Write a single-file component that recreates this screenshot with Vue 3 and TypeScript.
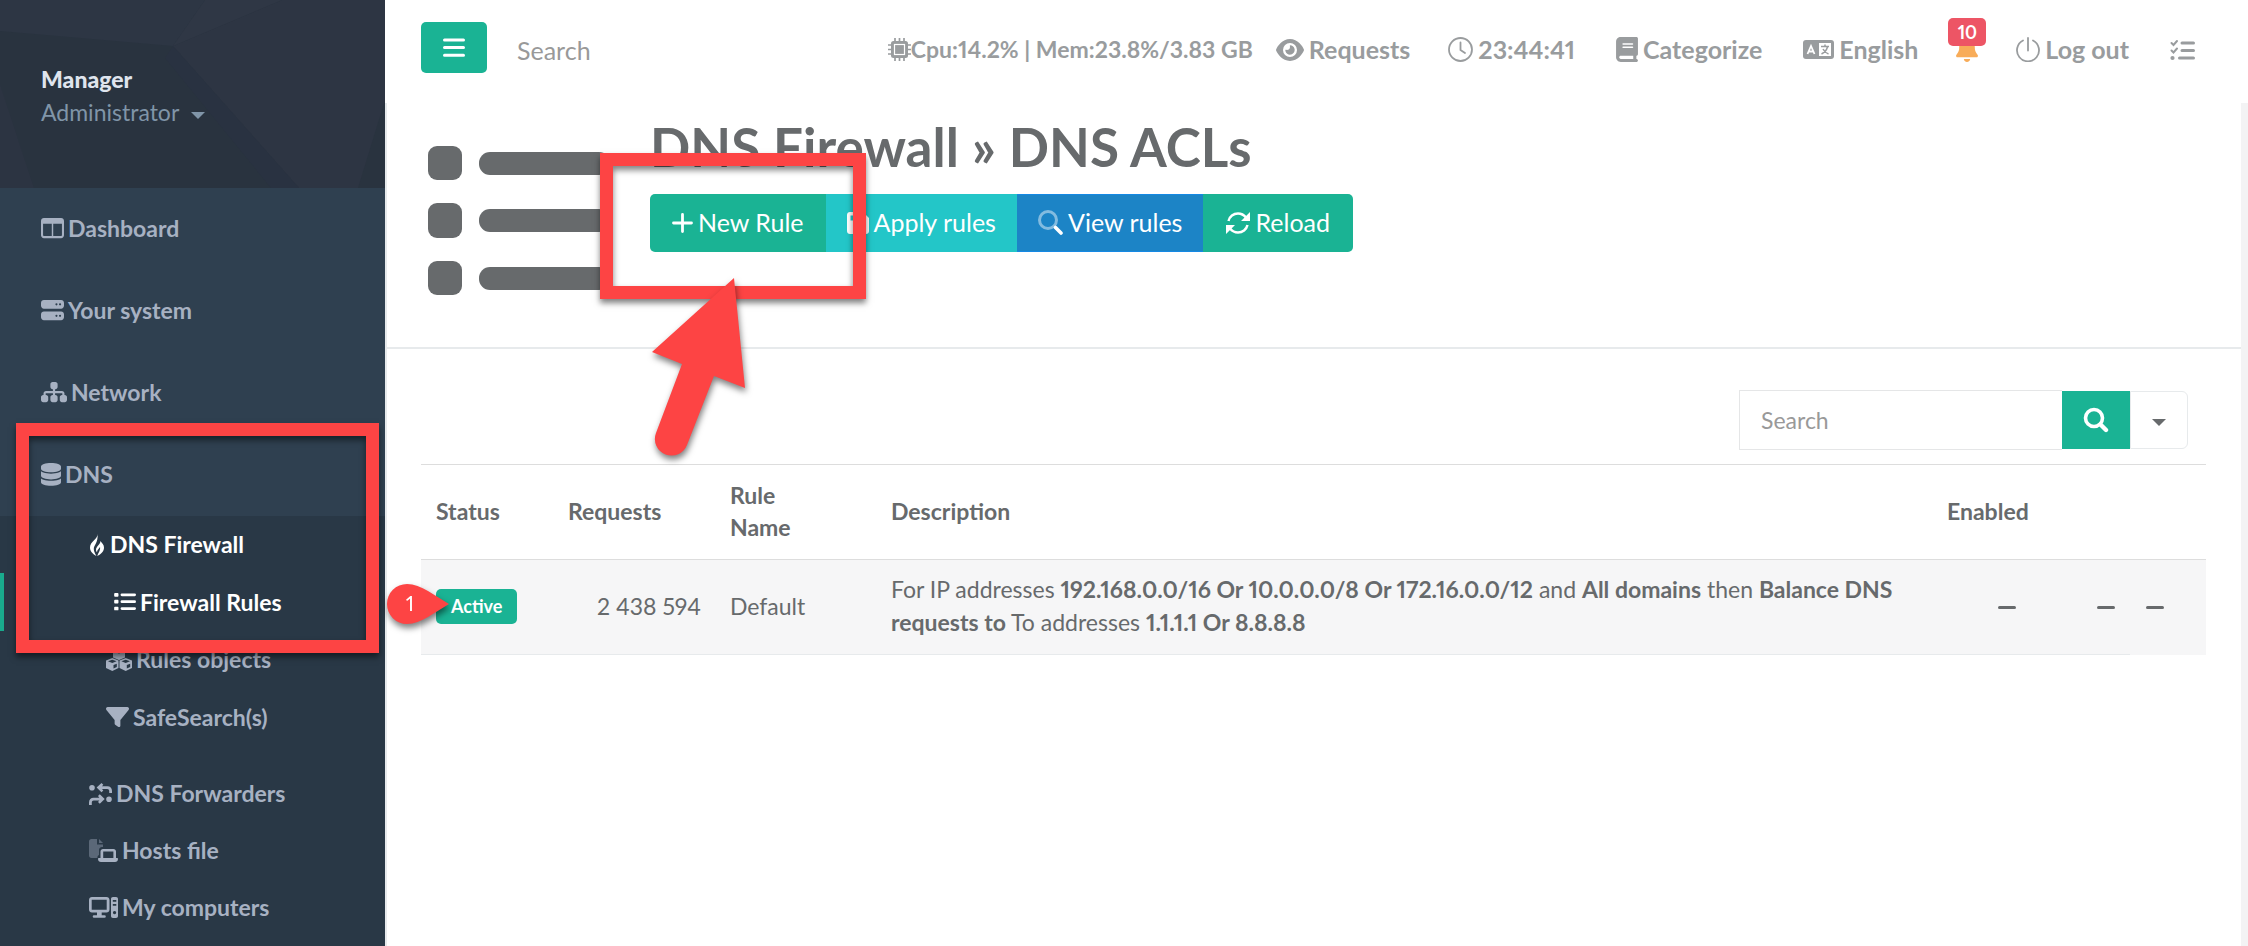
<script setup lang="ts">
import { ref } from 'vue'

interface NavItem {
  label: string
  icon: string
}

const mainItems: NavItem[] = [
  { label: 'Dashboard', icon: 'columns' },
  { label: 'Your system', icon: 'server' },
  { label: 'Network', icon: 'sitemap' },
  { label: 'DNS', icon: 'database' },
]

const firewallItems: NavItem[] = [
  { label: 'Firewall Rules', icon: 'list' },
  { label: 'Rules objects', icon: 'cubes' },
  { label: 'SafeSearch(s)', icon: 'filter' },
]

const dnsItems: NavItem[] = [
  { label: 'DNS Forwarders', icon: 'forward' },
  { label: 'Hosts file', icon: 'hosts' },
  { label: 'My computers', icon: 'computer' },
]

interface Shape {
  box: string
  width: number
  path: string
  faded?: string
}

const icons: Record<string, Shape> = {
  columns: {
    box: '0 32 512 448',
    width: 23,
    path: 'M64 32C29 32 0 61 0 96v320c0 35 29 64 64 64h384c35 0 64-29 64-64V96c0-35-29-64-64-64zM46 160h194v274H64c-10 0-18-8-18-18zM272 160h194v256c0 10-8 18-18 18H272z',
  },
  server: {
    box: '0 32 512 448',
    width: 23,
    path: 'M64 32C29 32 0 61 0 96v64c0 35 29 64 64 64h384c35 0 64-29 64-64V96c0-35-29-64-64-64zM344 104a24 24 0 1 1 0 48 24 24 0 1 1 0-48zm80 0a24 24 0 1 1 0 48 24 24 0 1 1 0-48zM64 288c-35 0-64 29-64 64v64c0 35 29 64 64 64h384c35 0 64-29 64-64v-64c0-35-29-64-64-64zm280 72a24 24 0 1 1 0 48 24 24 0 1 1 0-48zm80 0a24 24 0 1 1 0 48 24 24 0 1 1 0-48z',
  },
  sitemap: {
    box: '0 32 576 448',
    width: 26,
    path: 'M208 80c0-26 22-48 48-48h64c26 0 48 22 48 48v64c0 26-22 48-48 48h-8v40h152c31 0 56 25 56 56v32h8c26 0 48 22 48 48v64c0 26-22 48-48 48h-64c-26 0-48-22-48-48v-64c0-26 22-48 48-48h8v-32c0-4-4-8-8-8H312v40h8c26 0 48 22 48 48v64c0 26-22 48-48 48h-64c-26 0-48-22-48-48v-64c0-26 22-48 48-48h8v-40H112c-4 0-8 4-8 8v32h8c26 0 48 22 48 48v64c0 26-22 48-48 48H48c-26 0-48-22-48-48v-64c0-26 22-48 48-48h8v-32c0-31 25-56 56-56h152v-40h-8c-26 0-48-22-48-48z',
  },
  database: {
    box: '0 0 448 512',
    width: 20,
    path: 'M448 80v48c0 44.2-100.3 80-224 80S0 172.2 0 128V80C0 35.8 100.3 0 224 0S448 35.8 448 80zM393.2 214.7c20.8-7.4 39.9-16.9 54.8-28.6V288c0 44.2-100.3 80-224 80S0 332.2 0 288V186.1c14.9 11.8 34 21.2 54.8 28.6C99.7 230.7 159.5 240 224 240s124.3-9.3 169.2-25.3zM0 346.1c14.9 11.8 34 21.2 54.8 28.6C99.7 390.7 159.5 400 224 400s124.3-9.3 169.2-25.3c20.8-7.4 39.9-16.9 54.8-28.6V432c0 44.2-100.3 80-224 80S0 476.2 0 432V346.1z',
  },
  flame: {
    box: '0 0 14 22',
    width: 14,
    path: 'M7.6 0C7.8 5 0 7.500 0 13.500 0 17.500 3 20 6.400 22 4.600 18.500 3.600 16.500 3.800 14.500 4 11 8.200 9 7.600 0zM10.300 7C10.800 10.500 6 12 6 16c0 1 .5 1.800 1 2.200C7 15.500 9.400 14.500 10 13c.6 3-1.300 5-2.700 9C11 20 14 17.500 14 13.500 14 10.500 12 9 10.300 7z',
  },
  list: {
    box: '0 32 512 448',
    width: 22,
    path: 'M24 56h60a20 20 0 0 1 20 20v44a20 20 0 0 1-20 20H24a20 20 0 0 1-20-20V76a20 20 0 0 1 20-20zM184 64h296a32 32 0 0 1 0 64H184a32 32 0 0 1 0-64zM24 214h60a20 20 0 0 1 20 20v44a20 20 0 0 1-20 20H24a20 20 0 0 1-20-20v-44a20 20 0 0 1 20-20zM184 224h296a32 32 0 0 1 0 64H184a32 32 0 0 1 0-64zM24 374h60a20 20 0 0 1 20 20v44a20 20 0 0 1-20 20H24a20 20 0 0 1-20-20v-44a20 20 0 0 1 20-20zM184 384h296a32 32 0 0 1 0 64H184a32 32 0 0 1 0-64z',
  },
  cubes: {
    box: '0 0 26 24',
    width: 26,
    path: 'M13 0l6 2.400v8L13 13 7 10.400v-8zM9 4v1l4 1.600L17 5V4l-4 1.600zM6.300 11l6.200 2.500v7.500L6.300 24 0 21v-7.500zM2 14.300l4.300 1.800 4.300-1.800-4.300-1.600zM7.500 18v3.500l3.300-1.500v-3.300zM19.700 11l6.300 2.500V21l-6.300 3-6.200-3v-7.500zM15.400 14.300l4.300 1.800 4.300-1.800-4.300-1.600zM20.800 18v3.500l3.400-1.500v-3.300z',
  },
  filter: {
    box: '0 32 512 448',
    width: 23,
    path: 'M3.900 54.900C10.500 40.900 24.500 32 40 32H472c15.500 0 29.500 8.900 36.100 22.900s4.600 30.500-5.200 42.500L320 320.900V448c0 12.100-6.800 23.200-17.700 28.600s-23.800 4.300-33.500-3l-64-48c-8.100-6-12.800-15.500-12.800-25.600V320.900L9 97.300C-.7 85.400-2.800 68.800 3.900 54.900z',
  },
  forward: {
    box: '0 0 23 22',
    width: 23,
    path: 'M3 2a2.800 2.800 0 1 1 0 5.600A2.800 2.800 0 1 1 3 2zM12.500 0l1.800 1.800L13 3.300h5.500c2.600 0 4.500 2 4.500 4.700v2h-2.800V8c0-1.200-.8-2-2-2H13l1.300 1.400-1.800 1.800L7.600 4.600zM20 13.400a2.800 2.800 0 1 1 0 5.600 2.800 2.800 0 1 1 0-5.600zM10.800 11.300l4.900 4.800-4.900 4.700L9 19l1.400-1.500H4.800c-1.200 0-2 .8-2 2V22H0v-2.500c0-2.700 1.900-4.700 4.500-4.700h5.900L9 13.100z',
  },
  hosts: {
    box: '0 0 29 23',
    width: 29,
    faded: 'M2.500 0H8v5.500h6V8h-1c-1.800 0-3 1.400-3 3v5c-1.200.5-1.800 1.500-1.500 3h-6C1 19 0 18 0 16.500v-14C0 1 1 0 2.500 0zM10 0l4 4h-4z',
    path: 'M14 10h10.500c1.400 0 2.500 1 2.500 2.500V19h1c.600 0 1 .4 1 1 0 1.700-1.300 3-3 3H12c-1.700 0-3-1.300-3-3 0-.6.400-1 1-1h1.500v-6.500c0-1.500 1.100-2.500 2.500-2.500zm.2 2.600V19h10.200v-6.400z',
  },
  computer: {
    box: '0 0 29 21',
    width: 29,
    path: 'M3 0h14.500c1.700 0 3 1.300 3 3v9.500c0 1.700-1.300 3-3 3h-4.800v2.700h2.800a1.300 1.300 0 0 1 0 2.600H5a1.300 1.300 0 0 1 0-2.600h3v-2.700H3c-1.700 0-3-1.300-3-3V3c0-1.700 1.300-3 3-3zm-.3 2.700v10.100h15V2.700zM24.500 0H27c1.200 0 2 .8 2 2v17c0 1.200-.8 2-2 2h-3c-1.200 0-2-.8-2-2V2c0-1.200.8-2 2-2zM23.800 3v1.700h3.500V3zM23.800 7v1.700h3.500V7zM25.500 14a1.600 1.600 0 1 0 .1 0z',
  },
}

const search = ref('')
const tableSearch = ref('')
</script>

<template>
  <div class="page">
    <nav class="sidebar">
      <header class="profile">
        <svg class="facets" viewBox="0 0 385 188" preserveAspectRatio="none" aria-hidden="true">
          <path fill="#29333f" d="M0 0h385v188H0z" />
          <path fill="#2d3644" d="M0 0h205l-32 46L0 31z" />
          <path fill="#2d3543" d="M173 46L282 0h103v100l-27 88h-59z" />
          <path fill="#2f3745" d="M205 0h77L173 46z" />
          <path fill="#293241" d="M173 46l126 142h-28L165 58z" />
          <path fill="#2c3442" d="M0 84l34 104H0z" />
        </svg>
        <div class="profile-text">
          <strong>Manager</strong>
          <button class="role" type="button">Administrator <i class="caret"></i></button>
        </div>
      </header>
      <ul class="menu">
        <li v-for="item in mainItems" :key="item.label">
          <a href="#">
            <svg class="icon" :viewBox="icons[item.icon].box" :width="icons[item.icon].width" aria-hidden="true">
              <path fill-rule="evenodd" :d="icons[item.icon].path" />
            </svg>
            <span>{{ item.label }}</span>
          </a>
        </li>
      </ul>
      <ul class="submenu">
        <li>
          <a href="#" class="current flame">
            <svg class="icon" :viewBox="icons.flame.box" :width="icons.flame.width" aria-hidden="true">
              <path :d="icons.flame.path" />
            </svg>
            <span>DNS Firewall</span>
          </a>
          <ul class="third">
            <li v-for="(item, i) in firewallItems" :key="item.label" :class="{ active: i === 0 }">
              <a href="#" :class="{ current: i === 0 }">
                <svg class="icon" :viewBox="icons[item.icon].box" :width="icons[item.icon].width" aria-hidden="true">
                  <path fill-rule="evenodd" :d="icons[item.icon].path" />
                </svg>
                <span>{{ item.label }}</span>
              </a>
            </li>
          </ul>
        </li>
        <li v-for="item in dnsItems" :key="item.label">
          <a href="#">
            <svg class="icon" :viewBox="icons[item.icon].box" :width="icons[item.icon].width" aria-hidden="true">
              <path v-if="icons[item.icon].faded" opacity="0.4" :d="icons[item.icon].faded" />
              <path fill-rule="evenodd" :d="icons[item.icon].path" />
            </svg>
            <span>{{ item.label }}</span>
          </a>
        </li>
      </ul>
      <div class="mark-frame mark-menu"></div>
    </nav>

    <main class="content">
      <div class="topbar">
        <button class="toggle" type="button" aria-label="Toggle menu">
          <svg width="22" height="20" viewBox="0 0 22 20" aria-hidden="true">
            <path d="M1.500 2h19M1.500 9.600h19M1.500 17.200h19" stroke="#fff" stroke-width="3" stroke-linecap="round" />
          </svg>
        </button>
        <input v-model="search" class="top-search" type="text" placeholder="Search" aria-label="Search" />
        <ul class="toplinks">
          <li class="cpu">
            <a href="#">
              <svg width="23" height="23" viewBox="0 0 23 23" aria-hidden="true">
                <path d="M7 0v23M11.500 0v23M16 0v23M0 7h23M0 11.500h23M0 16h23" stroke="currentColor" stroke-width="1.700" />
                <rect x="3" y="3" width="17" height="17" rx="2.500" fill="currentColor" />
                <rect x="6.500" y="6.500" width="10" height="10" fill="currentColor" stroke="#fff" stroke-width="1.200" />
              </svg><span>Cpu:14.2% | Mem:23.8%/3.83 GB</span>
            </a>
          </li>
          <li class="requests">
            <a href="#">
              <svg width="28" height="22" viewBox="0 32 576 448" aria-hidden="true">
                <path fill="currentColor" d="M288 32c-80.800 0-145.500 36.800-192.600 80.600C48.600 156 17.300 208 2.500 243.700c-3.300 7.900-3.300 16.700 0 24.600C17.300 304 48.600 356 95.400 399.400C142.500 443.200 207.200 480 288 480s145.500-36.800 192.600-80.600c46.800-43.500 78.100-95.400 93-131.100c3.300-7.900 3.300-16.700 0-24.600c-14.900-35.700-46.200-87.700-93-131.100C433.500 68.800 368.800 32 288 32zM144 256a144 144 0 1 1 288 0 144 144 0 1 1 -288 0zm144-64c0 35.300-28.700 64-64 64c-7.100 0-13.900-1.200-20.300-3.300c-5.500-1.800-11.900 1.600-11.700 7.400c.3 6.900 1.300 13.800 3.200 20.700c13.700 51.200 66.400 81.600 117.600 67.900s81.600-66.400 67.900-117.600c-11.100-41.500-47.800-69.400-88.600-71.100c-5.800-.2-9.200 6.100-7.400 11.700c2.100 6.400 3.300 13.200 3.300 20.300z" />
              </svg>
              <span>Requests</span>
            </a>
          </li>
          <li>
            <a href="#">
              <svg width="25" height="25" viewBox="0 0 25 25" fill="none" stroke="currentColor" aria-hidden="true">
                <circle cx="12.500" cy="12.500" r="11.500" stroke-width="1.800" />
                <path d="M12.500 5.500v7.500l4.500 3" stroke-width="1.800" stroke-linecap="round" />
              </svg>
              <span>23:44:41</span>
            </a>
          </li>
          <li class="wide">
            <a href="#">
              <svg width="22" height="25" viewBox="0 0 448 512" aria-hidden="true">
                <path fill="currentColor" d="M96 0C43 0 0 43 0 96V416c0 53 43 96 96 96H384h32c17.700 0 32-14.300 32-32s-14.300-32-32-32V384c17.700 0 32-14.300 32-32V32c0-17.700-14.300-32-32-32H384 96zm0 384H352v64H96c-17.700 0-32-14.300-32-32s14.300-32 32-32zm32-240c0-8.800 7.200-16 16-16H336c8.800 0 16 7.200 16 16s-7.200 16-16 16H144c-8.800 0-16-7.200-16-16zm16 48H336c8.800 0 16 7.200 16 16s-7.200 16-16 16H144c-8.800 0-16-7.200-16-16s7.200-16 16-16z" />
              </svg>
              <span>Categorize</span>
            </a>
          </li>
          <li class="wide">
            <a href="#">
              <svg width="31" height="19" viewBox="0 0 31 19" aria-hidden="true">
                <rect width="31" height="19" rx="3" fill="currentColor" />
                <path d="M16 3h12v13H16z" fill="#fff" />
                <path d="M4.500 14L8 6l3.500 8M5.700 11.500h4.600" fill="none" stroke="#fff" stroke-width="1.800" />
                <path d="M18 6.500h8M22 4.500v2M24.500 7c-1 3.500-3 5.500-6 7M20 9c1.500 3 3 4 5.500 5" fill="none" stroke="currentColor" stroke-width="1.500" />
              </svg>
              <span>English</span>
            </a>
          </li>
          <li class="narrow">
            <a href="#" class="bell" aria-label="10 notifications">
              <svg width="22" height="25" viewBox="0 0 448 512" aria-hidden="true">
                <path fill="#f8ac59" d="M224 0c-17.700 0-32 14.300-32 32V51.200C119 66 64 130.600 64 208v18.800c0 47-17.300 92.400-48.500 127.600l-7.400 8.300c-8.400 9.400-10.400 22.900-5.300 34.400S19.400 416 32 416H416c12.600 0 24-7.400 29.200-18.900s3.100-25-5.300-34.400l-7.400-8.300C401.300 319.200 384 273.900 384 226.800V208c0-77.400-55-142-128-156.800V32c0-17.700-14.300-32-32-32zm45.300 493.300c12-12 18.700-28.300 18.700-45.300H224 160c0 17 6.700 33.300 18.700 45.300s28.300 18.700 45.300 18.700s33.300-6.700 45.300-18.700z" />
              </svg>
              <span class="badge">10</span>
            </a>
          </li>
          <li class="narrow">
            <a href="#">
              <svg width="24" height="25" viewBox="0 0 24 25" fill="none" stroke="currentColor" stroke-width="1.800" stroke-linecap="round" aria-hidden="true">
                <path d="M12 1v12.500M7 3.500a11 11 0 1 0 10 0" />
              </svg>
              <span>Log out</span>
            </a>
          </li>
          <li class="wide">
            <a href="#" aria-label="Tasks">
              <svg width="25" height="22" viewBox="0 0 25 22" fill="none" stroke="currentColor" stroke-linecap="round" aria-hidden="true">
                <path d="M12 4h11.500M12 11.500h11.500M9.500 19h14" stroke-width="3" />
                <path d="M1.500 4l2 2L7 2M1.500 11.500l2 2L7 9.500" stroke-width="2" />
                <circle cx="2.500" cy="19" r="2.100" fill="currentColor" stroke="none" />
              </svg>
            </a>
          </li>
        </ul>
      </div>

      <section class="panel">
        <div class="heading">
          <svg class="heading-icon" width="184" height="150" viewBox="0 0 184 150" aria-hidden="true">
            <g fill="#676a6c">
              <rect x="1" y="1" width="34" height="34" rx="9" />
              <rect x="52" y="7" width="131" height="23" rx="11" />
              <rect x="1" y="58" width="34" height="35" rx="9" />
              <rect x="52" y="64" width="131" height="23" rx="11" />
              <rect x="1" y="116" width="34" height="34" rx="9" />
              <rect x="52" y="122" width="131" height="23" rx="11" />
            </g>
          </svg>
          <div class="heading-body">
            <h1>DNS Firewall » DNS ACLs</h1>
            <div class="btn-group">
              <button type="button" class="btn primary">
                <svg width="21" height="20" viewBox="0 0 21 20" aria-hidden="true">
                  <path d="M10.500 1.500v17M1.500 10h18" stroke="#fff" stroke-width="2.800" stroke-linecap="round" />
                </svg>
                <span>New Rule</span>
              </button>
              <button type="button" class="btn info">
                <svg width="22" height="22" viewBox="0 0 22 22" aria-hidden="true">
                  <path fill="#fff" fill-rule="evenodd" d="M3 0h13l6 6v13c0 1.700-1.300 3-3 3H3c-1.700 0-3-1.300-3-3V3c0-1.700 1.300-3 3-3zm.5 3.500v5h12v-5zM11 12a3 3 0 1 0 .1 0z" />
                </svg>
                <span>Apply rules</span>
              </button>
              <button type="button" class="btn view">
                <svg width="25" height="25" viewBox="0 0 25 25" fill="none" stroke="#fff" aria-hidden="true">
                  <circle cx="10" cy="10" r="8.500" stroke-width="3" opacity="0.45" />
                  <path d="M17.500 17.500l5.500 5.500" stroke-width="3.600" stroke-linecap="round" />
                </svg>
                <span>View rules</span>
              </button>
              <button type="button" class="btn primary">
                <svg width="24" height="22" viewBox="0 0 24 22" aria-hidden="true">
                  <path d="M2.500 9C3.500 4.500 7.500 1.500 12 1.500c3.500 0 6 1.500 8 4M21.500 13c-1 4.500-5 7.500-9.500 7.500-3.500 0-6-1.500-8-4" fill="none" stroke="#fff" stroke-width="2.500" />
                  <path fill="#fff" d="M24 0v9h-9zM0 22v-9h9z" />
                </svg>
                <span>Reload</span>
              </button>
            </div>
          </div>
        </div>

        <div class="body">
          <div class="filter">
            <input v-model="tableSearch" type="text" placeholder="Search" aria-label="Search rules" />
            <button type="button" class="go" aria-label="Search">
              <svg width="26" height="26" viewBox="0 0 26 26" fill="none" stroke="#fff" aria-hidden="true">
                <circle cx="11" cy="11" r="8.500" stroke-width="3.600" />
                <path d="M17.500 17.500l5.500 5.500" stroke-width="4.400" stroke-linecap="round" />
              </svg>
            </button>
            <button type="button" class="more" aria-label="More options"><i class="caret"></i></button>
          </div>

          <table>
            <colgroup>
              <col class="c-status" /><col class="c-req" /><col class="c-name" /><col />
              <col class="c-enabled" /><col class="c-act" /><col class="c-act" /><col class="c-end" />
            </colgroup>
            <thead>
              <tr>
                <th>Status</th>
                <th>Requests</th>
                <th>Rule Name</th>
                <th>Description</th>
                <th>Enabled</th>
                <th></th>
                <th></th>
                <th></th>
              </tr>
            </thead>
            <tbody>
              <tr>
                <td><span class="label">Active</span></td>
                <td class="num">2 438 594</td>
                <td>Default</td>
                <td>
                  For IP addresses <b>192.168.0.0/16 Or 10.0.0.0/8 Or 172.16.0.0/12</b> and
                  <b>All domains</b> then <b>Balance DNS requests to</b> To addresses <b>1.1.1.1 Or 8.8.8.8</b>
                </td>
                <td class="mid"><i class="dash"></i></td>
                <td class="mid"><i class="dash"></i></td>
                <td class="mid open"><i class="dash"></i></td>
                <td class="open"></td>
              </tr>
            </tbody>
          </table>
        </div>
      </section>
    </main>

    <div class="mark-frame mark-new"></div>
    <svg class="mark-arrow" width="100" height="184" viewBox="0 0 100 184" aria-hidden="true">
      <path fill="#fd4444" d="M84 2L2 76l30 12-26 69a16.300 16.300 0 0 0 31 12l27-69 31 12z" />
    </svg>
    <svg class="mark-pin" width="64" height="42" viewBox="0 0 64 42" aria-hidden="true">
      <path fill="#fd4444" d="M63 21C49 13 35 1 21 1a20 20 0 0 0 0 40C35 41 49 29 63 21z" />
      <text x="24" y="28" text-anchor="middle" fill="#fff" font-size="21">1</text>
    </svg>
  </div>
</template>

<style>
body {
  margin: 0;
  background: #fff;
}
</style>

<style scoped>
.page {
  position: relative;
  display: flex;
  min-height: 100vh;
  overflow: hidden;
  background: #fff;
  color: #676a6c;
  font: 400 23px/33px Lato, "Open Sans", sans-serif;
  font-variant-numeric: proportional-nums;
}
.page *,
.page *::before {
  box-sizing: border-box;
}
button,
input {
  margin: 0;
  border: 0;
  background: none;
  font: inherit;
  color: inherit;
}
input::placeholder {
  color: #999;
  opacity: 1;
}
ul {
  margin: 0;
  padding: 0;
  list-style: none;
}
a {
  color: inherit;
  text-decoration: none;
}
.caret {
  display: inline-block;
  border: 7px solid transparent;
  border-top-color: currentColor;
  border-bottom: 0;
  vertical-align: middle;
}

.sidebar {
  position: relative;
  flex: 0 0 385px;
  height: 100vh;
  overflow: hidden;
  background: #293846;
  color: #a7b1c2;
  font-weight: 700;
}
.profile {
  position: relative;
  height: 188px;
  padding: 63px 41px 0;
}
.facets {
  position: absolute;
  inset: 0;
  width: 100%;
  height: 100%;
}
.profile-text {
  position: relative;
  display: flex;
  flex-direction: column;
  align-items: flex-start;
}
.profile strong {
  color: #dfe4ed;
}
.role {
  padding: 0;
  color: #8095a8;
  font-weight: 400;
}
.role .caret {
  margin-left: 6px;
}
.menu {
  background: #2f4050;
}
.menu a {
  display: flex;
  align-items: center;
  gap: 4px;
  height: 82px;
  padding: 0 0 1px 41px;
}
.icon {
  flex: none;
  fill: currentColor;
}
.submenu a {
  display: flex;
  align-items: center;
  gap: 4px;
  height: 57px;
  padding-left: 89px;
}
.submenu a.current {
  color: #fff;
}
.submenu a.flame {
  gap: 6px;
  padding-left: 90px;
}
.third {
  padding-bottom: 18px;
}
.third a {
  height: 58px;
  padding: 0 0 2px 106px;
}
.third .active {
  border-left: 4px solid #19aa8d;
}
.third .active a {
  padding: 0 0 0 110px;
}

.content {
  flex: 1;
  min-width: 0;
}
.topbar {
  display: flex;
  align-items: flex-start;
  height: 103px;
  padding: 22px 53px 0 36px;
}
.toggle {
  display: grid;
  place-items: center;
  width: 66px;
  height: 51px;
  border-radius: 5px;
  background: #1ab394;
}
.top-search {
  flex: 1;
  min-width: 0;
  height: 55px;
  padding: 0 0 0 30px;
  font-size: 25px;
}
.toplinks {
  display: flex;
  color: #999c9e;
  font-size: 25px;
  font-weight: 700;
  white-space: nowrap;
}
.toplinks li {
  margin-left: 38px;
}
.toplinks li.requests {
  margin-left: 23px;
}
.toplinks li.wide {
  margin-left: 41px;
}
.toplinks li.narrow {
  margin-left: 33px;
}
.toplinks a {
  position: relative;
  display: flex;
  align-items: center;
  gap: 5px;
  height: 55px;
}
.toplinks .cpu a {
  gap: 0;
  font-size: 23px;
}
.bell {
  width: 32px;
  justify-content: center;
}
.badge {
  position: absolute;
  top: -4px;
  left: -3px;
  width: 38px;
  border-radius: 5px;
  background: #ed5565;
  color: #fff;
  font-size: 18px;
  line-height: 28px;
  text-align: center;
}

.panel {
  min-height: calc(100vh - 103px);
  border-left: 2px solid #e7eaec;
  border-right: 7px solid #f3f3f4;
}
.heading {
  display: flex;
  gap: 39px;
  height: 246px;
  padding: 0 40px;
  border-bottom: 2px solid #e7eaec;
}
.heading-icon {
  flex: none;
  margin-top: 42px;
}
h1 {
  margin: 10px 0 0;
  font-size: 53px;
  font-weight: 700;
  line-height: 68px;
  white-space: nowrap;
}
.btn-group {
  display: flex;
  margin-top: 13px;
  border-radius: 5px;
  overflow: hidden;
  width: max-content;
}
.btn {
  display: flex;
  align-items: center;
  gap: 5px;
  height: 58px;
  padding: 0 22px 1px;
  color: #fff;
  font-size: 25px;
}
.primary {
  background: #1ab394;
}
.primary:last-child {
  padding: 0 23px 1px;
}
.info {
  padding: 0 21px 1px;
  background: #23c6c8;
}
.view {
  padding: 0 21px 1px;
  background: #1c84c6;
  border: 1px solid #1589e4;
  border-width: 1px 0;
}

.body {
  padding: 41px 35px 0 34px;
}
.filter {
  display: flex;
  align-items: center;
  justify-content: flex-end;
  padding-right: 18px;
}
.filter input {
  width: 323px;
  height: 60px;
  padding: 0 21px;
  border: 1px solid #e5e6e7;
  border-right: 0;
}
.go {
  display: grid;
  place-items: center;
  width: 68px;
  height: 58px;
  background: #1ab394;
}
.more {
  width: 58px;
  height: 58px;
  border: 1px solid #e7eaec;
  border-radius: 0 6px 6px 0;
}
table {
  width: 100%;
  margin-top: 14px;
  border-collapse: separate;
  border-spacing: 0;
  table-layout: fixed;
}
.c-status { width: 132px; }
.c-req { width: 162px; }
.c-name { width: 161px; }
.c-enabled { width: 149px; }
.c-act { width: 49px; }
.c-end { width: 27px; }
th,
td {
  padding: 13px 15px 15px;
  text-align: left;
}
th {
  height: 96px;
  border-top: 1px solid #ddd;
  border-bottom: 1px solid #ddd;
  font-weight: 700;
  line-height: 32px;
}
th:nth-child(3) {
  padding-right: 75px;
}
td {
  height: 95px;
  border-bottom: 1px solid #e7eaec;
  background: #f6f6f7;
}
td.open {
  border-bottom-color: #f6f6f7;
}
td.num {
  padding-right: 14px;
  text-align: right;
}
td.mid {
  padding: 0 0 5px;
  text-align: center;
}
b {
  font-weight: 700;
}
.dash {
  display: inline-block;
  width: 18px;
  height: 3px;
  border-radius: 2px;
  background: #676a6c;
  vertical-align: middle;
}
.label {
  display: inline-block;
  padding: 0 15px;
  border-radius: 5px;
  background: #1ab394;
  color: #fff;
  font-size: 18px;
  font-weight: 700;
  line-height: 35px;
}

.mark-frame {
  position: absolute;
  border: 13px solid #fd4444;
  box-shadow: 0 4px 6px rgba(0, 0, 0, 0.5), inset 0 4px 6px rgba(0, 0, 0, 0.5);
}
.mark-menu {
  top: 423px;
  left: 16px;
  width: 363px;
  height: 230px;
}
.mark-new {
  top: 153px;
  left: 600px;
  width: 266px;
  height: 146px;
}
.mark-arrow,
.mark-pin {
  position: absolute;
  overflow: visible;
  filter: drop-shadow(1px 4px 3px rgba(0, 0, 0, 0.5));
}
.mark-arrow {
  top: 276px;
  left: 650px;
}
.mark-pin {
  top: 583px;
  left: 386px;
}
</style>
